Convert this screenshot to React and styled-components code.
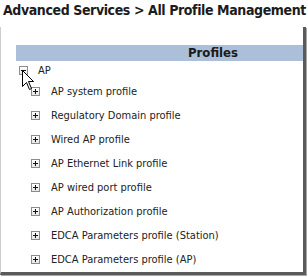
import styled, { createGlobalStyle } from "styled-components";

const GlobalStyle = createGlobalStyle`
  body {
    margin: 0;
    background: #ffffff;
    font-family: "DejaVu Sans Condensed", "DejaVu Sans", sans-serif;
    font-stretch: condensed;
  }
`;

const Page = styled.div`
  position: relative;
  width: 308px;
  height: 277px;
  overflow: hidden;
  background: #ffffff;
`;

const Title = styled.h1`
  margin: 0;
  padding: 2px 0 0 3px;
  height: 25px;
  box-sizing: border-box;
  font-size: 14px;
  line-height: 16px;
  letter-spacing: -0.4px;
  font-weight: bold;
  color: #1c1c1c;
  white-space: nowrap;
`;

const Panel = styled.div`
  margin-top: 2px;
  width: 306px;
  height: 248px;
  box-sizing: border-box;
  border-left: 1px solid #cdcdcd;
  border-right: 3px solid #5a5a5a;
  border-bottom: 3px solid #5a5a5a;
  box-shadow: 1px 1px 0 #a8a8a8;
  padding-top: 18px;
`;

const HeaderBar = styled.div`
  margin-left: 15px;
  height: 16px;
  background: #abc0d8;
  padding-left: 172px;
  font-size: 13px;
  line-height: 16px;
  font-weight: bold;
  color: #1a1a1a;
`;

const Row = styled.div`
  display: flex;
  align-items: center;
  height: ${(p) => (p.$root ? "17px" : "24px")};
  margin-top: ${(p) => (p.$root ? "1px" : "0")};
  padding-left: ${(p) => (p.$root ? "18px" : "30px")};
  gap: ${(p) => (p.$root ? "10px" : "11px")};
  font-size: 11px;
  color: #222;
  white-space: nowrap;
`;

const Box = styled.span`
  display: inline-flex;
  align-items: center;
  justify-content: center;
  width: 9px;
  height: 9px;
  box-sizing: border-box;
  border: 1px solid #8c8c8c;
  background: linear-gradient(#ffffff, #e6e6e6);
`;

const Cursor = styled.svg`
  position: absolute;
  left: 22px;
  top: 70px;
`;

const Toggle = ({ open }) => (
  <Box>
    <svg width="5" height="5" viewBox="0 0 5 5">
      <rect x="0" y="2" width="5" height="1" fill="#111" />
      {!open && <rect x="2" y="0" width="1" height="5" fill="#111" />}
    </svg>
  </Box>
);

const items = [
  "AP system profile",
  "Regulatory Domain profile",
  "Wired AP profile",
  "AP Ethernet Link profile",
  "AP wired port profile",
  "AP Authorization profile",
  "EDCA Parameters profile (Station)",
  "EDCA Parameters profile (AP)",
];

export default function App() {
  return (
    <Page>
      <GlobalStyle />
      <Title>Advanced Services &gt; All Profile Management</Title>
      <Panel>
        <HeaderBar>Profiles</HeaderBar>
        <Row $root>
          <Toggle open />
          <span>AP</span>
        </Row>
        {items.map((name) => (
          <Row key={name}>
            <Toggle />
            <span>{name}</span>
          </Row>
        ))}
      </Panel>
      <Cursor width="13" height="21" viewBox="0 0 13 21">
        <path
          d="M0.5 0.5 L0.5 16.5 L4.5 12.5 L7.5 19.5 L9.5 18.5 L6.5 11.5 L11.5 11.5 Z"
          fill="#ffffff"
          stroke="#000000"
          strokeWidth="1"
          strokeLinejoin="miter"
        />
      </Cursor>
    </Page>
  );
}
